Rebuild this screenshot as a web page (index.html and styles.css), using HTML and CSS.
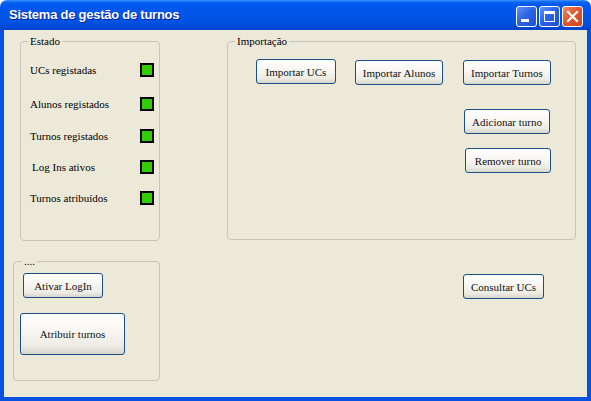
FILE: index.html
```html
<!DOCTYPE html>
<html lang="pt">
<head>
<meta charset="utf-8">
<title>Sistema de gestão de turnos</title>
<link rel="stylesheet" href="styles.css">
</head>
<body>
<div class="window">
  <div class="titlebar">
    <span class="title">Sistema de gestão de turnos</span>
    <div class="caption-btns">
      <span class="cbtn cmin"><svg width="21" height="21" viewBox="0 0 21 21"><rect x="5" y="13" width="8" height="3" fill="#fff"/></svg></span>
      <span class="cbtn cmax"><svg width="21" height="21" viewBox="0 0 21 21"><rect x="5.5" y="5.5" width="10" height="10" fill="none" stroke="#fff" stroke-width="1"/><rect x="5" y="5" width="11" height="3" fill="#fff"/></svg></span>
      <span class="cbtn cclose"><svg width="21" height="21" viewBox="0 0 21 21"><path d="M6 6 L15 15 M15 6 L6 15" stroke="#fff" stroke-width="2.2" stroke-linecap="square"/></svg></span>
    </div>
  </div>
  <div class="client">
    <div class="col-left">
      <fieldset class="group group-estado">
        <legend>Estado</legend>
        <div class="status-list">
          <div class="status-row"><span>UCs registadas</span><span class="led"></span></div>
          <div class="status-row"><span>Alunos registados</span><span class="led"></span></div>
          <div class="status-row"><span>Turnos registados</span><span class="led"></span></div>
          <div class="status-row indent"><span>Log Ins ativos</span><span class="led"></span></div>
          <div class="status-row"><span>Turnos atribuídos</span><span class="led"></span></div>
        </div>
      </fieldset>
      <fieldset class="group group-misc">
        <legend>....</legend>
        <button class="btn btn-login">Ativar LogIn</button>
        <button class="btn btn-atribuir">Atribuir turnos</button>
      </fieldset>
    </div>
    <div class="col-right">
      <fieldset class="group group-imp">
        <legend>Importação</legend>
        <div class="imp-row">
          <button class="btn btn-ucs">Importar UCs</button>
          <button class="btn btn-alunos">Importar Alunos</button>
          <button class="btn btn-turnos">Importar Turnos</button>
        </div>
        <button class="btn btn-add">Adicionar turno</button>
        <button class="btn btn-rem">Remover turno</button>
      </fieldset>
      <button class="btn btn-consultar">Consultar UCs</button>
    </div>
  </div>
</div>
</body>
</html>
```

FILE: styles.css
```css
html, body {
  margin: 0;
  padding: 0;
  background: #ffffff;
}
.window {
  width: 591px;
  height: 401px;
  display: flex;
  flex-direction: column;
  border-radius: 7px 7px 0 0;
  overflow: hidden;
  font-family: "Liberation Serif", "Times New Roman", serif;
  font-size: 11px;
  color: #000;
}
.titlebar {
  height: 30px;
  flex: none;
  display: flex;
  align-items: center;
  justify-content: space-between;
  padding: 0 8px 0 9px;
  box-sizing: border-box;
  background: linear-gradient(to bottom, #3d95ff 0px, #0a66f4 2px, #0058ee 5px, #0055e8 14px, #0052e3 22px, #0047d3 28px, #0040c8 30px);
}
.title {
  color: #fff;
  font-family: "Liberation Sans", Arial, sans-serif;
  font-weight: bold;
  font-size: 13px;
  letter-spacing: -0.25px;
  text-shadow: 1px 1px 0 #0a1e9a;
  margin-top: -2px;
}
.caption-btns {
  display: flex;
  gap: 2px;
  margin-top: 2px;
}
.cbtn {
  width: 21px;
  height: 21px;
  box-sizing: border-box;
  border: 1px solid #fff;
  border-radius: 3px;
  display: flex;
}
.cbtn svg { margin: -1px; }
.cmin, .cmax {
  background: linear-gradient(135deg, #5f93f8 0%, #2c64e6 45%, #1f4fd6 100%);
}
.cclose {
  background: linear-gradient(135deg, #ef8a67 0%, #e3582e 45%, #cf4320 100%);
}
.client {
  flex: 1;
  display: flex;
  background: #ece9d8;
  border-left: 4px solid #0750e0;
  border-right: 4px solid #0750e0;
  border-bottom: 4px solid #0750e0;
}
.col-left {
  width: 156px;
  display: flex;
  flex-direction: column;
  align-items: flex-end;
}
.group {
  margin: 0;
  padding: 0;
  border: 1px solid #c8c5b4;
  border-radius: 4px;
  box-sizing: border-box;
  min-width: 0;
}
.group legend {
  padding: 0 2px;
  margin-left: 7px;
  line-height: 13px;
  color: #000;
}
.group-estado {
  width: 140px;
  height: 206px;
  margin-top: 5px;
}
.status-list {
  display: flex;
  flex-direction: column;
  gap: 16px;
  padding: 14px 5px 0 9px;
}
.status-row {
  display: flex;
  align-items: center;
  justify-content: space-between;
  height: 15px;
}
.status-row:nth-child(2) { margin-top: 3px; }
.status-row:nth-child(3) { margin-top: 1px; }
.status-row.indent { padding-left: 2px; }
.led {
  width: 14px;
  height: 14px;
  box-sizing: border-box;
  border: 2px solid #000;
  background: #33cc00;
}
.group-misc {
  width: 147px;
  height: 126px;
  margin-top: 14px;
  display: flex;
  flex-direction: column;
  align-items: flex-start;
}
.group-misc legend { margin-left: 8px; }
.btn {
  font-family: "Liberation Serif", "Times New Roman", serif;
  font-size: 11px;
  font-weight: normal;
  color: #111;
  border: 1px solid #1c4f85;
  border-radius: 3px;
  background: linear-gradient(to bottom, #ffffff 0%, #f8f7f3 40%, #ecebe4 80%, #d8d4c8 100%);
  box-sizing: border-box;
  padding: 0;
  height: 25px;
  flex: none;
}
.btn-login { width: 80px; margin: 5px 0 0 9px; }
.btn-atribuir { width: 105px; height: 42px; margin: 15px 0 0 6px; }
.col-right {
  margin-left: 67px;
  display: flex;
  flex-direction: column;
  align-items: flex-start;
}
.group-imp {
  width: 349px;
  height: 205px;
  margin-top: 5px;
}
.group-imp legend { margin-left: 7px; }
.imp-row {
  display: flex;
  gap: 19px;
  margin: 11px 0 0 28px;
  align-items: flex-start;
}
.btn-ucs { width: 80px; }
.btn-alunos { width: 88px; margin-top: 1px; }
.btn-turnos { width: 88px; margin-top: 1px; margin-left: 1px; }
.btn-add { display: block; width: 86px; margin: 24px 0 0 236px; }
.btn-rem { display: block; width: 86px; margin: 14px 0 0 237px; }
.btn-consultar { width: 81px; margin: 34px 0 0 236px; }
```
